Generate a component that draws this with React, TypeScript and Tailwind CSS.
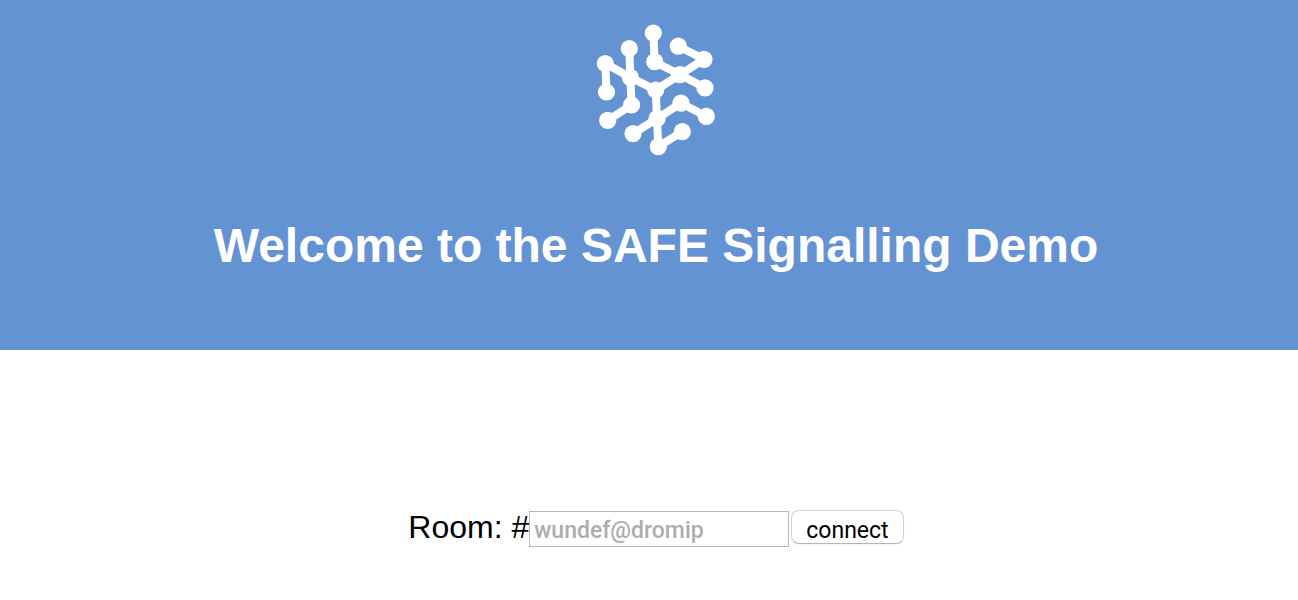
const nodes: [number, number][] = [
  [68.3, 18], [44.3, 33.5], [93.3, 31.2], [20.3, 48.5], [119, 44.3], [69.7, 46.7], [45.3, 62.3], [95, 59.7],
  [21.5, 77], [120, 72.8], [70.7, 75], [46.6, 90], [96, 88.2], [22.7, 105.3], [121.3, 101.3], [72, 103.7],
  [48, 118.6], [97.3, 116.7], [73.3, 131.7],
];

const links: [number, number][] = [
  [3, 8], [3, 6], [1, 6], [6, 11], [11, 13], [6, 10], [0, 5], [5, 7], [2, 4],
  [4, 7], [7, 9], [7, 10], [10, 15], [15, 12], [12, 14], [15, 16], [15, 18], [18, 17],
];

function Logo() {
  return (
    <svg width="142" height="150" viewBox="0 0 142 150" fill="white" stroke="white" role="img" aria-label="SAFE logo">
      {links.map(([a, b]) => (
        <line key={`${a}-${b}`} x1={nodes[a][0]} y1={nodes[a][1]} x2={nodes[b][0]} y2={nodes[b][1]} strokeWidth="8" />
      ))}
      {nodes.map(([x, y]) => (
        <circle key={`${x}-${y}`} cx={x} cy={y} r="8.6" stroke="none" />
      ))}
    </svg>
  );
}

export default function App() {
  return (
    <div className="bg-white text-black font-['Liberation_Sans',Arial,sans-serif]">
      <header className="flex flex-col items-center bg-[#6493d4] pt-[15px] pb-[74px] pl-3.5">
        <Logo />
        <h1 className="mt-[51px] text-center text-5xl leading-[60px] font-bold text-white">Welcome to the SAFE Signalling Demo</h1>
      </header>
      <main className="pt-40 pb-12 pl-3.5">
        <form className="flex items-start justify-center" onSubmit={(e) => e.preventDefault()}>
          <label htmlFor="room" className="text-[32px] leading-[34px]">Room: #</label>
          <input
            id="room"
            type="text"
            placeholder="wundef@dromip"
            className="mt-px h-9 w-[260px] border border-[#b8b8b8] bg-white px-1 pt-0.5 font-[Roboto,sans-serif] text-[23px] placeholder:font-medium placeholder:text-[#adadad]"
          />
          <button type="submit" className="ml-0.5 h-[34px] rounded-lg border border-[#d2d2d2] border-b-[#b4b4b4] bg-white px-3.5 pt-2 font-[Roboto,sans-serif] text-[23px] leading-6 shadow-xs">
            connect
          </button>
        </form>
      </main>
    </div>
  );
}
